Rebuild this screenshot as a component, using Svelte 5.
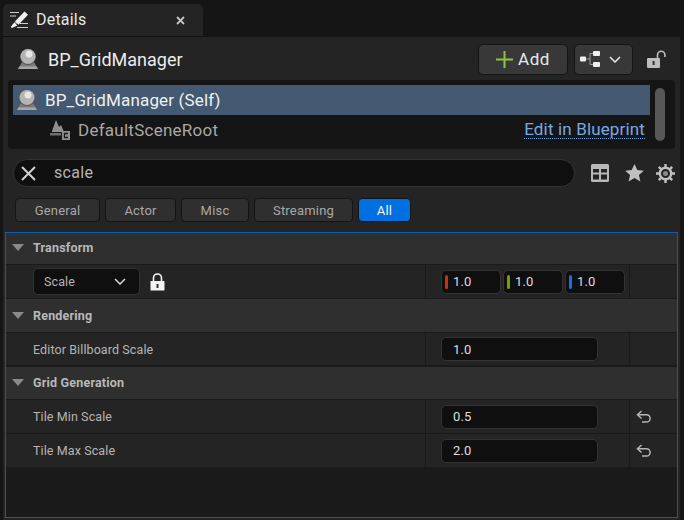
<script lang="ts">
  const filters = [
    { name: 'General', width: 85 },
    { name: 'Actor', width: 71 },
    { name: 'Misc', width: 68 },
    { name: 'Streaming', width: 99 },
    { name: 'All', width: 53 }
  ];
  const axes = ['x', 'y', 'z'];
</script>

{#snippet actorIcon()}
  <svg width="20" height="20" viewBox="0 0 20 20">
    <path d="M4 13h12l4 7H0z" fill="#7c7c7c" />
    <path d="M1.500 17.500h17l1.500 2.500H0z" fill="#a6a6a6" />
    <circle cx="10" cy="8" r="8" fill="#585858" />
    <circle cx="10" cy="7.500" r="7.500" fill="#b4b4b4" />
    <circle cx="11" cy="5" r="3.500" fill="#e6e6e6" />
  </svg>
{/snippet}

{#snippet resetIcon()}
  <svg width="15" height="14" viewBox="0 0 15 14" fill="none" stroke="#b5b5b5" stroke-width="1.500">
    <path d="M5.500 1L1.500 4.800 5.500 8.500" />
    <path d="M1.500 4.800h9a3.600 3.600 0 0 1 0 7.200H6" />
  </svg>
{/snippet}

<div class="window">
  <div class="tab">
    <svg width="20" height="20" viewBox="0 0 20 20">
      <path d="M1 2.500h9M1 6h6M5 13h3M8 17.500h11M11 13.500h8" stroke="#cfcfcf" stroke-width="1" fill="none" />
      <path d="M15.500 1.500l3.500 3.200-9.500 10-3.600-3.200z" fill="#f2f2f2" />
      <path d="M5.200 12.500l3.200 3-5.500 2.600-1.200-1.200z" fill="#f2f2f2" />
    </svg>
    <span class="tab-label">Details</span>
    <svg class="tab-close" width="9" height="9" viewBox="0 0 9 9">
      <path d="M1 1l7 7M8 1l-7 7" stroke="#c4c4c4" stroke-width="1.800" />
    </svg>
  </div>

  <div class="panel">
    <div class="header">
      {@render actorIcon()}
      <span class="title">BP_GridManager</span>
      <button class="add">
        <svg width="17" height="17" viewBox="0 0 17 17">
          <path d="M8.500 0v17M0 8.500h17" stroke="#8bc63f" stroke-width="2" />
        </svg>
        Add
      </button>
      <button class="hierarchy">
        <svg width="20" height="16" viewBox="0 0 20 16">
          <path d="M6 8h4M10 2.500v11M10 2.500h3M10 13.500h3" stroke="#9a9a9a" stroke-width="1" fill="none" />
          <rect x="0" y="5.500" width="6" height="5" rx="1" fill="#efefef" />
          <rect x="13" y="0" width="7" height="5" rx="1" fill="#efefef" />
          <rect x="13" y="11" width="7" height="5" rx="1" fill="#efefef" />
        </svg>
        <svg width="12" height="7" viewBox="0 0 12 7">
          <path d="M1 1l5 5 5-5" stroke="#e8e8e8" stroke-width="1.500" fill="none" />
        </svg>
      </button>
      <svg class="unlock" width="19" height="19" viewBox="0 0 19 19">
        <path d="M10.500 8V5a3.700 3.700 0 0 1 7.400 0v2" stroke="#bdbdbd" stroke-width="1.600" fill="none" />
        <rect x="0" y="8" width="13" height="10" rx="1" fill="#bdbdbd" />
        <rect x="5.600" y="11" width="2" height="4" fill="#333" />
      </svg>
    </div>

    <div class="tree">
      <div class="tree-rows">
        <div class="tree-row selected">
          {@render actorIcon()}
          <span>BP_GridManager (Self)</span>
        </div>
        <div class="tree-row child">
          <svg width="20" height="20" viewBox="0 0 20 20">
            <path d="M2 11L6 0l3 7 2-2 3 7H2z" fill="#8f8f8f" />
            <path d="M0 13h11v2.500H0z" fill="#6e6e6e" />
            <path d="M12 11h8v9h-8z" fill="#8f8f8f" />
            <path d="M18 13.500h-3.500v4H18" stroke="#1a1a1a" stroke-width="1.300" fill="none" />
          </svg>
          <span class="child-name">DefaultSceneRoot</span>
          <span class="edit-link">Edit in Blueprint</span>
        </div>
      </div>
      <div class="scrollbar"></div>
    </div>

    <div class="search-row">
      <div class="search">
        <svg width="15" height="15" viewBox="0 0 15 15">
          <path d="M1 1l13 13M14 1L1 14" stroke="#d0d0d0" stroke-width="2" />
        </svg>
        <span>scale</span>
      </div>
      <svg class="tool-table" width="18" height="18" viewBox="0 0 18 18" fill="#b8b8b8">
        <path fill-rule="evenodd" d="M1.500 0h15A1.500 1.500 0 0 1 18 1.500v15a1.500 1.500 0 0 1-1.500 1.500h-15A1.500 1.500 0 0 1 0 16.500v-15A1.500 1.500 0 0 1 1.500 0zM2 5v3.500h6V5zM10 5v3.500h6V5zM2 10.500V15.500h6v-5zM10 10.500v5h6v-5z" />
      </svg>
      <svg class="tool-star" width="19" height="18" viewBox="0 0 19 18">
        <path d="M9.500 0l2.800 6 6.500.7-4.900 4.300 1.500 6.500-5.900-3.400-5.900 3.400 1.500-6.500L.2 6.700 6.700 6z" fill="#c0c0c0" />
      </svg>
      <svg class="tool-gear" width="19" height="19" viewBox="0 0 19 19">
        <path d="M9.500 0v4M9.500 15v4M0 9.500h4M15 9.500h4M2.800 2.800l2.800 2.800M13.400 13.400l2.800 2.800M16.200 2.800l-2.800 2.800M5.600 13.400l-2.800 2.800" stroke="#c0c0c0" stroke-width="2.400" />
        <circle cx="9.500" cy="9.500" r="5.700" fill="#242424" stroke="#c0c0c0" stroke-width="2.400" />
        <circle cx="9.500" cy="9.500" r="2.500" fill="#8a8a8a" />
      </svg>
    </div>

    <div class="filters">
      {#each filters as f}
        <button class="filter" class:active={f.name === 'All'} style:width="{f.width}px">{f.name}</button>
      {/each}
    </div>

    <div class="details">
      <div class="cat first">
        <i class="caret"></i>Transform
      </div>
      <div class="row">
        <div class="name">
          <div class="select">
            <span>Scale</span>
            <svg width="12" height="7" viewBox="0 0 12 7">
              <path d="M1 1l5 5 5-5" stroke="#d8d8d8" stroke-width="1.500" fill="none" />
            </svg>
          </div>
          <svg class="lock" width="15" height="18" viewBox="0 0 15 18">
            <path d="M3.500 8V5a4 4 0 0 1 8 0v3" stroke="#f4f4f4" stroke-width="1.600" fill="none" />
            <rect x="0.500" y="8" width="14" height="9.500" rx="0.500" fill="#f4f4f4" />
            <rect x="6.500" y="11" width="2" height="4" fill="#333" />
          </svg>
        </div>
        <div class="value vec">
          {#each axes as a}
            <div class="input small">
              <i class="axis {a}"></i>1.0
            </div>
          {/each}
        </div>
        <div class="reset"></div>
      </div>

      <div class="cat">
        <i class="caret"></i>Rendering
      </div>
      <div class="row short">
        <div class="name">Editor Billboard Scale</div>
        <div class="value"><div class="input">1.0</div></div>
        <div class="reset"></div>
      </div>

      <div class="cat ruled">
        <i class="caret"></i>Grid Generation
      </div>
      <div class="row">
        <div class="name">Tile Min Scale</div>
        <div class="value"><div class="input">0.5</div></div>
        <div class="reset">{@render resetIcon()}</div>
      </div>
      <div class="row">
        <div class="name">Tile Max Scale</div>
        <div class="value"><div class="input">2.0</div></div>
        <div class="reset">{@render resetIcon()}</div>
      </div>
    </div>
  </div>
</div>

<style>
  :global(body) {
    margin: 0;
    background: #151515;
  }

  .window {
    width: 684px;
    height: 520px;
    overflow: hidden;
    font-family: Roboto, "Liberation Sans", sans-serif;
    color: #c0c0c0;
    padding: 4px 4px 0 3px;
    box-sizing: border-box;
  }

  .tab {
    width: 200px;
    height: 33px;
    background: #242424;
    border-radius: 5px 5px 0 0;
    border-bottom: 1px solid #111;
    display: flex;
    align-items: center;
    padding-left: 6px;
    box-sizing: border-box;
  }

  .tab-label {
    font-size: 16px;
    color: #e6e6e6;
    margin: 0 0 2px 7px;
    letter-spacing: 0.2px;
  }

  .tab-close {
    margin-left: auto;
    margin-right: 18px;
  }

  .panel {
    height: 483px;
    background: #242424;
    display: flex;
    flex-direction: column;
  }

  .header {
    height: 43px;
    padding: 1px 0 0 15px;
    box-sizing: border-box;
    display: flex;
    align-items: center;
    flex: none;
  }

  .title {
    font-size: 18px;
    color: #ececec;
    margin-left: 10px;
  }

  button {
    font-family: inherit;
    padding: 0;
  }

  .add,
  .hierarchy {
    height: 31px;
    background: #383838;
    border: 1px solid #141414;
    border-radius: 5px;
    display: flex;
    align-items: center;
    box-sizing: border-box;
  }

  .add {
    width: 90px;
    margin-left: auto;
    justify-content: center;
    gap: 5px;
    font-size: 17px;
    letter-spacing: 0.5px;
    color: #e8e8e8;
  }

  .hierarchy {
    width: 59px;
    margin-left: 6px;
    gap: 9px;
    padding-left: 5px;
  }

  .unlock {
    margin: 0 14px 0 14px;
  }

  .tree {
    height: 69px;
    flex: none;
    margin: 0 5px;
    padding: 5px 10px 5px 5px;
    box-sizing: border-box;
    background: #151515;
    border-radius: 4px;
    display: flex;
  }

  .tree-rows {
    width: 637px;
  }

  .tree-row {
    height: 30px;
    display: flex;
    align-items: center;
    font-size: 17px;
    letter-spacing: 0.15px;
  }

  .tree-row.selected {
    background: #435971;
    color: #f0f0f0;
    padding-left: 4px;
    gap: 8px;
  }

  .tree-row.child {
    height: 29px;
    padding-left: 37px;
    gap: 8px;
    color: #a8a8a8;
  }

  .child-name {
    letter-spacing: 0.25px;
  }

  .edit-link {
    margin-left: auto;
    margin-right: 5px;
    color: #77a9e2;
    border-bottom: 1px dotted #77a9e2;
    line-height: 18px;
  }

  .scrollbar {
    width: 10px;
    height: 53px;
    margin: 3px 0 0 5px;
    border-radius: 5px;
    background: #575757;
  }

  .search-row {
    display: flex;
    align-items: center;
    margin-top: 10px;
    padding-left: 10px;
    flex: none;
  }

  .search {
    width: 562px;
    height: 28px;
    box-sizing: border-box;
    border: 1px solid #333;
    border-radius: 14px;
    background: #0f0f0f;
    display: flex;
    align-items: center;
    padding-left: 7px;
    font-size: 16px;
    color: #b5b5b5;
  }

  .search span {
    margin-left: 18px;
    margin-top: -2px;
    letter-spacing: 0.3px;
  }

  .tool-table {
    margin-left: 16px;
  }

  .tool-star {
    margin-left: 16px;
  }

  .tool-gear {
    margin-left: 12px;
  }

  .filters {
    display: flex;
    gap: 5px;
    margin-top: 11px;
    padding-left: 12px;
    flex: none;
  }

  .filter {
    height: 24px;
    background: #2f2f2f;
    border: 1px solid #141414;
    border-radius: 4px;
    font-size: 13px;
    letter-spacing: 0.2px;
    color: #a8a8a8;
    box-sizing: border-box;
  }

  .filter.active {
    background: #0070e0;
    color: #f2f2f2;
  }

  .details {
    margin: 10px 2px 0 2px;
    height: 286px;
    box-sizing: border-box;
    border: 1px solid #0f5eaa;
    background: #1a1a1a;
    flex: none;
  }

  .cat {
    height: 34px;
    box-sizing: border-box;
    background: #2f2f2f;
    border-bottom: 1px solid #1a1a1a;
    display: flex;
    align-items: center;
    font-size: 12.500px;
    font-weight: 700;
    color: #b8b8b8;
    padding-left: 6px;
    letter-spacing: 0.2px;
  }

  .cat.first {
    height: 32px;
    padding-bottom: 2px;
  }

  .cat.ruled {
    border-top: 1px solid #1a1a1a;
    padding-bottom: 2px;
  }

  .caret {
    width: 0;
    height: 0;
    border-left: 6px solid transparent;
    border-right: 6px solid transparent;
    border-top: 7px solid #8a8a8a;
    margin-right: 9px;
  }

  .row {
    height: 33px;
    background: #242424;
    border-bottom: 1px solid #1a1a1a;
    display: flex;
    font-size: 12.500px;
    color: #b5b5b5;
    letter-spacing: 0.1px;
  }

  .row.short {
    height: 32px;
  }

  .name {
    width: 419px;
    padding-left: 27px;
    box-sizing: border-box;
    display: flex;
    align-items: center;
  }

  .value {
    width: 205px;
    padding-left: 15px;
    box-sizing: border-box;
    display: flex;
    align-items: center;
    border-left: 1px solid #1a1a1a;
    border-right: 1px solid #1a1a1a;
  }

  .vec {
    gap: 2px;
  }

  .reset {
    width: 47px;
    display: flex;
    align-items: center;
    padding-left: 6px;
    box-sizing: border-box;
  }

  .input {
    width: 157px;
    height: 24px;
    box-sizing: border-box;
    background: #0f0f0f;
    border: 1px solid #333;
    border-radius: 5px;
    padding-left: 11px;
    display: flex;
    align-items: center;
    font-size: 13px;
    color: #dedede;
  }

  .input.small {
    width: 60px;
    padding-left: 3px;
  }

  .axis {
    width: 3px;
    height: 14px;
    border-radius: 1.500px;
    margin-right: 5px;
  }

  .axis.x { background: #c8300f; }
  .axis.y { background: #6ea300; }
  .axis.z { background: #1c6fe0; }

  .select {
    width: 107px;
    height: 27px;
    box-sizing: border-box;
    background: #0f0f0f;
    border: 1px solid #333;
    border-radius: 5px;
    display: flex;
    align-items: center;
    justify-content: space-between;
    padding: 0 13px 0 10px;
    color: #b5b5b5;
  }

  .lock {
    margin-left: 10px;
  }
</style>
